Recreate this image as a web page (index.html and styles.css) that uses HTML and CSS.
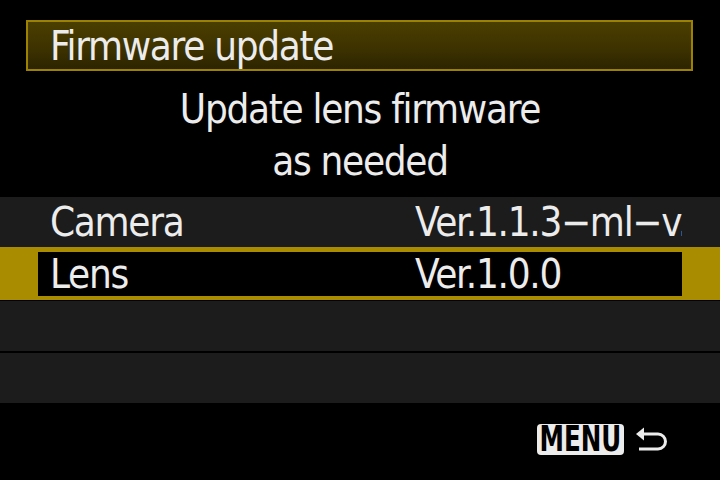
FILE: index.html
```html
<!DOCTYPE html>
<html>
<head>
<meta charset="utf-8">
<link rel="stylesheet" href="styles.css">
</head>
<body>
<div class="screen">
  <div class="title-bar"><span class="title">Firmware update</span></div>
  <div class="message">
    <div class="line">Update lens firmware</div>
    <div class="line">as needed</div>
  </div>
  <div class="list">
    <div class="row">
      <div class="cell label">Camera</div>
      <div class="cell value">Ver.1.1.3−ml−v.</div>
    </div>
    <div class="row selected">
      <div class="inner">
        <div class="cell label">Lens</div>
        <div class="cell value">Ver.1.0.0</div>
      </div>
    </div>
    <div class="row empty first-empty"></div>
    <div class="row empty"></div>
  </div>
  <div class="footer">
    <span class="menu-key"><span class="menu-text">MENU</span></span>
    <svg class="back" width="34" height="28" viewBox="0 0 34 28">
      <path d="M2 8 L10 1.5 L10 14.5 Z" fill="#ececec"/>
      <path d="M9 8 H24 A7.5 7.5 0 0 1 24 23 H5" fill="none" stroke="#ececec" stroke-width="3"/>
    </svg>
  </div>
</div>
</body>
</html>
```
FILE: styles.css
```css
html, body {
  margin: 0;
  padding: 0;
  background: #000;
}
.screen {
  width: 720px;
  height: 480px;
  background: #000;
  color: #ececec;
  font-family: "DejaVu Sans", sans-serif;
  font-stretch: condensed;
  font-size: 40px;
  letter-spacing: -1.3px;
  padding-top: 20px;
  box-sizing: border-box;
  overflow: hidden;
}
.title-bar {
  margin-left: 26px;
  width: 667px;
  height: 51px;
  box-sizing: border-box;
  border: 2px solid #9c8200;
  background: linear-gradient(#4b3e00, #3f3400 50%, #2c2400);
  padding-left: 22px;
  display: flex;
  align-items: center;
}
.title {
  line-height: 1;
}
.message {
  margin-top: 12px;
  text-align: center;
  line-height: 52px;
}
.list {
  margin-top: 10px;
  display: flex;
  flex-direction: column;
}
.row {
  height: 50px;
  background: #1c1c1c;
  display: flex;
  align-items: center;
}
.row .cell {
  line-height: 1;
}
.label {
  width: 365px;
  padding-left: 50px;
  flex: none;
}
.value {
  width: 267px;
  overflow: hidden;
  white-space: nowrap;
  flex: none;
}
.row.selected {
  height: 53px;
  background: #aa8c00;
  padding: 5px 38px 4px;
  box-sizing: border-box;
}
.selected .inner {
  background: #000;
  flex: 1;
  height: 100%;
  display: flex;
  align-items: center;
}
.selected .label {
  width: 365px;
  padding-left: 12px;
}
.row.first-empty {
  margin-top: 1px;
}
.row.empty + .row.empty {
  margin-top: 2px;
}
.footer {
  display: flex;
  align-items: center;
  justify-content: flex-end;
  padding-right: 52px;
  margin-top: 21px;
  gap: 10px;
}
.menu-key {
  background: #ececec;
  color: #000;
  border-radius: 4px;
  font-weight: bold;
  font-size: 35px;
  line-height: 31px;
  height: 31px;
  width: 87px;
  display: flex;
  justify-content: center;
  overflow: hidden;
  letter-spacing: 0;
}
.menu-text {
  display: inline-block;
  transform: scaleX(0.78);
  transform-origin: center;
}
.back {
  display: block;
}
```
